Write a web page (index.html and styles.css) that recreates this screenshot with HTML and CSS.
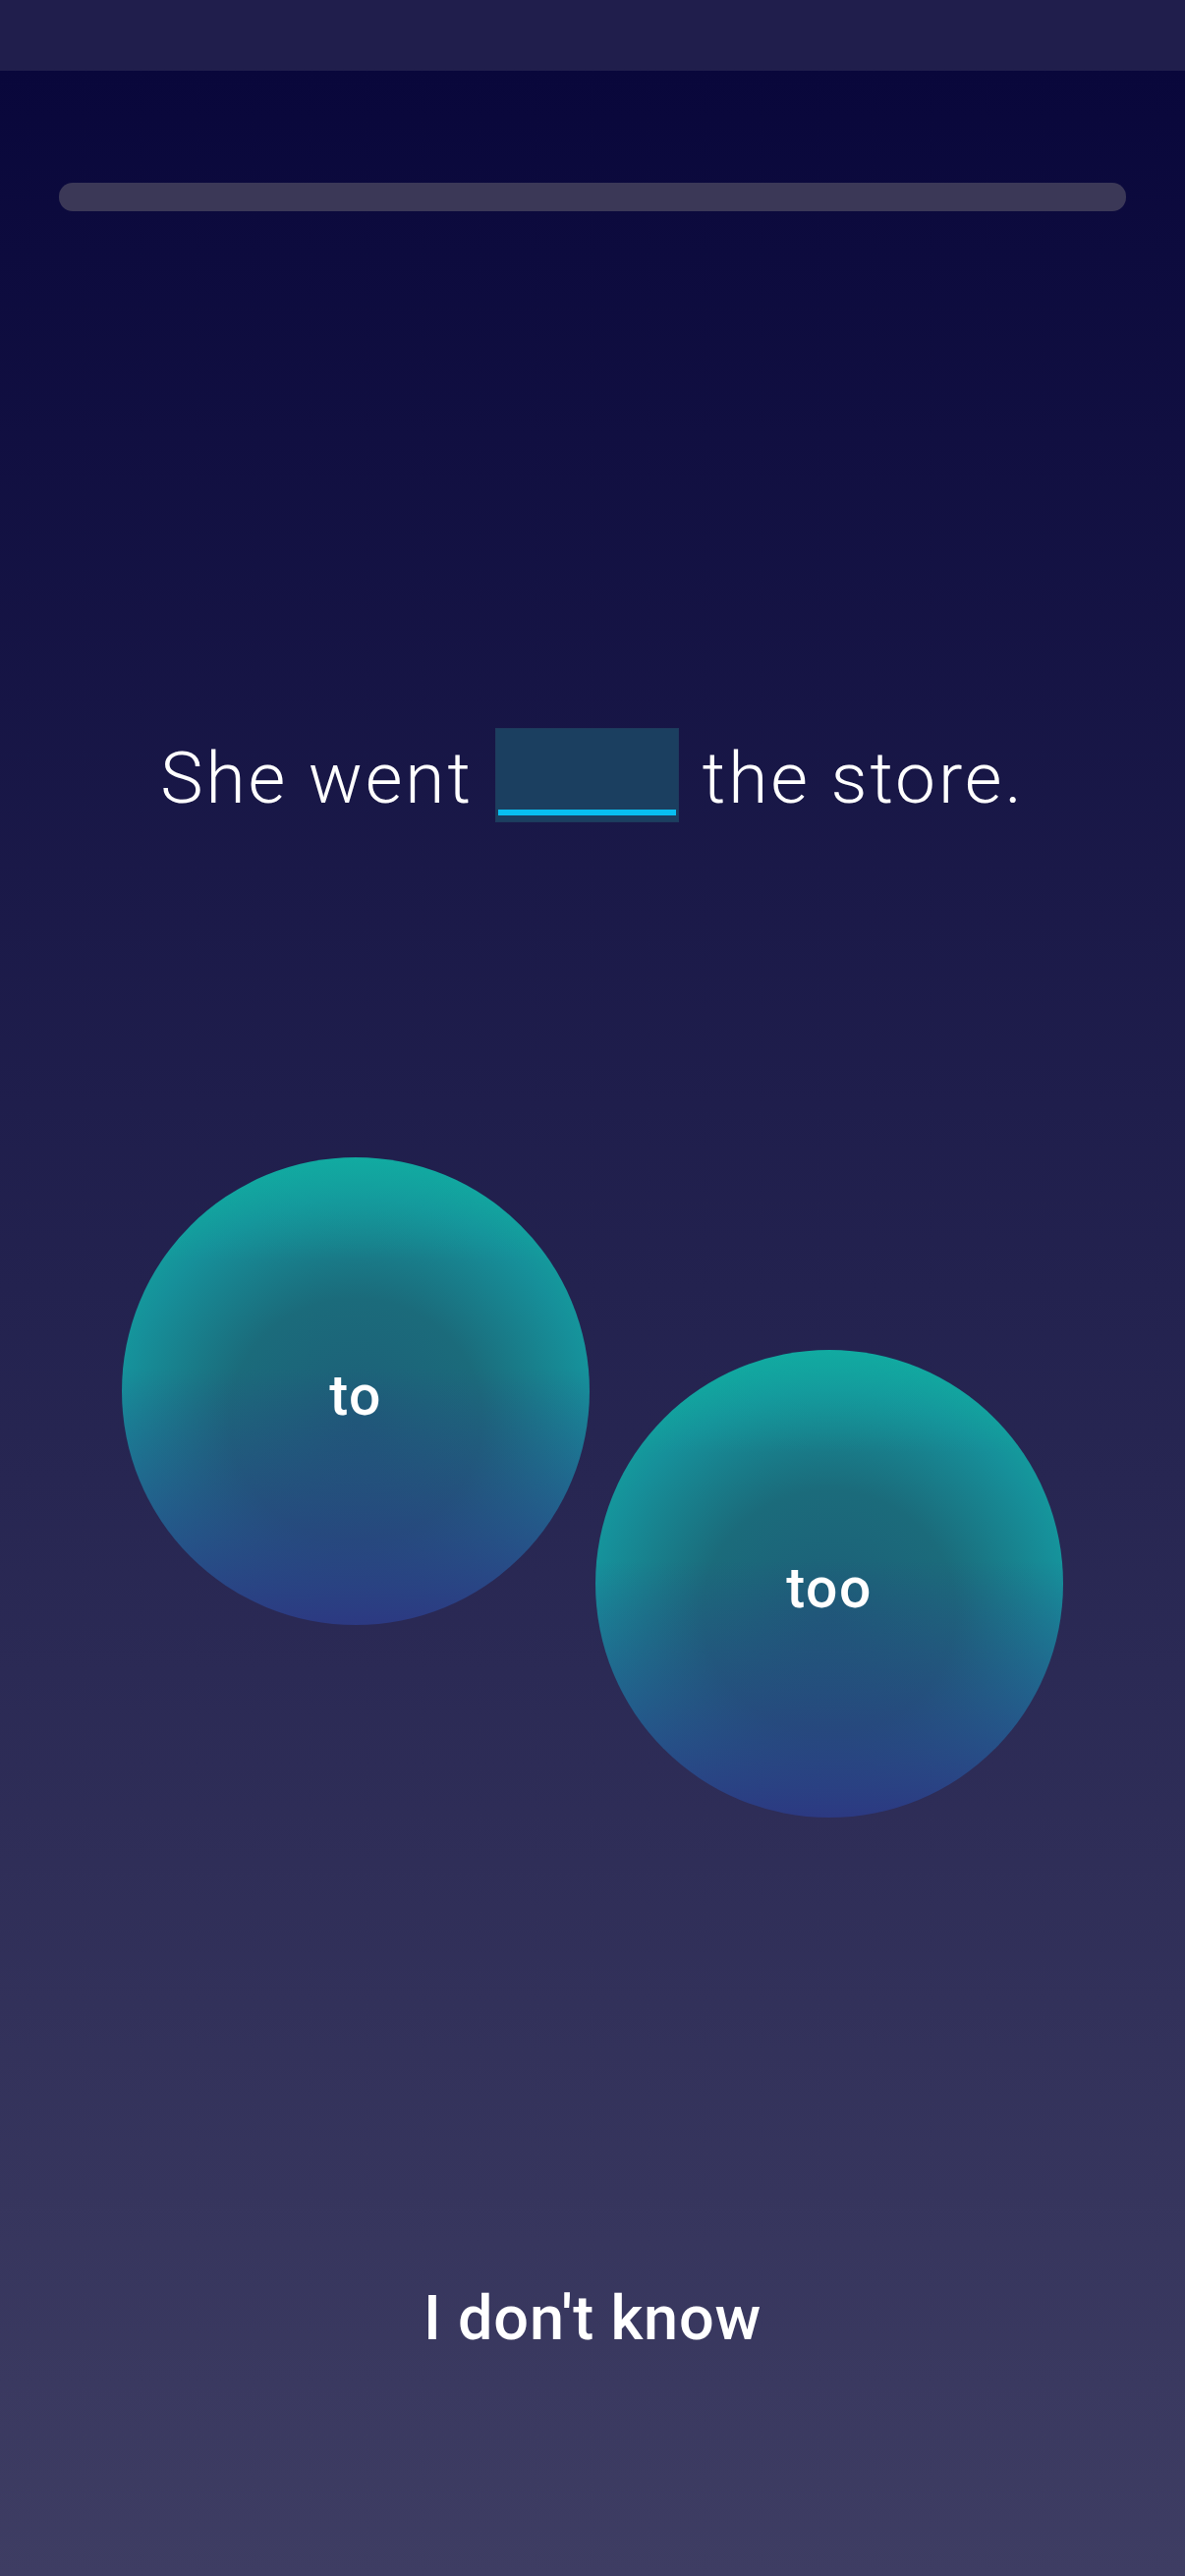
FILE: index.html
```html
<!DOCTYPE html>
<html lang="en">
<head>
<meta charset="utf-8">
<title>Quiz</title>
<link rel="stylesheet" href="styles.css">
</head>
<body>
<div class="status-bar"></div>
<main class="screen">
  <div class="progress"><div class="progress-fill"></div></div>
  <div class="sentence">
    <span class="words">She went</span>
    <span class="blank"><span class="blank-line"></span></span>
    <span class="words">the store.</span>
  </div>
  <div class="bubbles">
    <button class="bubble">to</button>
    <button class="bubble bubble-low">too</button>
  </div>
  <button class="dont-know">I don't know</button>
</main>
</body>
</html>
```
FILE: styles.css
```css
html, body {
  margin: 0;
  padding: 0;
}
body {
  width: 1206px;
  min-height: 2622px;
  background: linear-gradient(180deg, #09073b 72px, #23224f 50%, #3e3d63 100%);
  font-family: Roboto, "Liberation Sans", sans-serif;
  color: #ffffff;
}
.status-bar {
  height: 72px;
  background: #201e4c;
}
.screen {
  display: flex;
  flex-direction: column;
  align-items: center;
  padding: 114px 60px 0;
}
.progress {
  width: 100%;
  height: 29px;
  border-radius: 14px;
  background: #3b3857;
}
.progress-fill {
  width: 0;
  height: 100%;
}
.sentence {
  margin-top: 526px;
  display: flex;
  align-items: center;
  justify-content: center;
  gap: 24px;
  height: 96px;
}
.words {
  font-size: 73px;
  font-weight: 300;
  letter-spacing: 2.9px;
  line-height: 1;
  position: relative;
  top: 3px;
}
.blank {
  box-sizing: border-box;
  width: 187px;
  height: 96px;
  background: #1b3f60;
  border: 1px solid #1e3a5c;
  display: flex;
  align-items: flex-end;
  padding: 0 2px 6px;
  margin-left: -2px;
}
.blank-line {
  display: block;
  width: 100%;
  height: 6px;
  background: #08bff0;
}
.bubbles {
  margin-top: 341px;
  display: flex;
  align-items: flex-start;
  justify-content: center;
  gap: 6px;
}
.bubble {
  width: 476px;
  height: 476px;
  border: 0;
  padding: 8px 0 0;
  border-radius: 50%;
  color: #ffffff;
  font-family: Roboto, "Liberation Sans", sans-serif;
  font-size: 57px;
  font-weight: 500;
  letter-spacing: 1.5px;
  background:
    linear-gradient(180deg, rgba(16, 179, 163, 0.55) 0%, rgba(16, 179, 163, 0) 22%),
    linear-gradient(180deg, rgba(46, 50, 128, 0) 45%, rgba(46, 50, 128, 0.92) 100%),
    radial-gradient(ellipse 75% 72% at 50% 56%, #1d5f78 0%, #1b6b7b 36%, #16909a 66%, #10b3a3 92%);
}
.bubble-low {
  margin-top: 196px;
}
.dont-know {
  margin-top: 478px;
  border: 0;
  padding: 0;
  background: none;
  color: #ffffff;
  font-family: Roboto, "Liberation Sans", sans-serif;
  font-size: 63px;
  font-weight: 500;
  letter-spacing: 0.8px;
  line-height: 1;
}
```
